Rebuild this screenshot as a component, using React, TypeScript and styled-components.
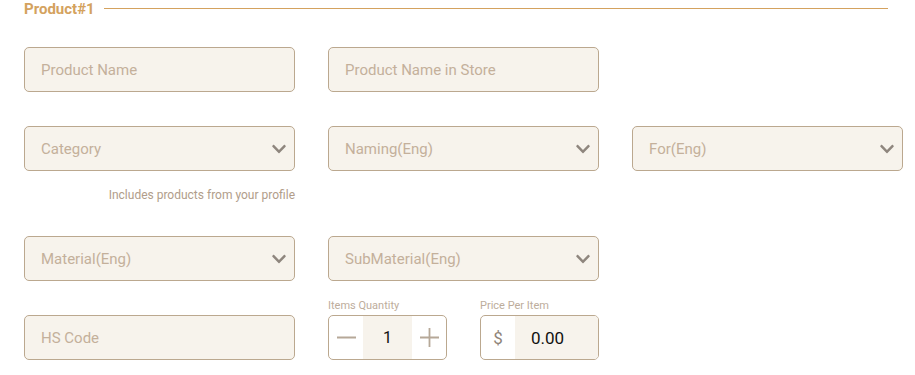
import styled, { createGlobalStyle } from 'styled-components';
import { FaChevronDown } from 'react-icons/fa';

const GlobalStyle = createGlobalStyle`
  body {
    margin: 0;
    background: #ffffff;
    font-family: Roboto, "Liberation Sans", sans-serif;
  }
`;

const Page = styled.div`
  padding: 0 12px 0 24px;
  width: 915px;
  box-sizing: border-box;
`;

const Legend = styled.div`
  display: flex;
  align-items: center;
  gap: 9px;
  height: 17px;
  margin-right: 15px;
  color: #d4a25e;
  font-size: 15px;
  font-weight: 700;

  &::after {
    content: '';
    flex: 1;
    height: 1px;
    background: #d4a25e;
  }
`;

const Row = styled.div<{ $top: number; $align?: string }>`
  display: grid;
  grid-template-columns: repeat(3, 271px);
  column-gap: 33px;
  align-items: ${(p) => p.$align || 'start'};
  margin-top: ${(p) => p.$top}px;
`;

const Cell = styled.div`
  display: flex;
  flex-direction: column;
`;

const Box = styled.div`
  box-sizing: border-box;
  height: 45px;
  display: flex;
  align-items: center;
  background: #f7f3ec;
  border: 1px solid #bba88f;
  border-radius: 5px;
  padding: 0 7px 0 16px;
  color: #c4b09b;
  font-size: 15px;
  overflow: hidden;
`;

const Placeholder = styled.span`
  flex: 1;
`;

const Chevron = styled(FaChevronDown)`
  color: #8f867e;
  width: 16px;
  height: 16px;
`;

const Helper = styled.div`
  margin-top: 17px;
  text-align: right;
  font-size: 12px;
  line-height: 14px;
  color: #b19d8a;
`;

const SmallPair = styled.div`
  display: flex;
  gap: 33px;
`;

const SmallField = styled.div`
  width: 119px;
  display: flex;
  flex-direction: column;
`;

const Label = styled.div`
  font-size: 11px;
  line-height: 13px;
  color: #bdad9c;
  margin-bottom: 3px;
`;

const Stepper = styled.div`
  box-sizing: border-box;
  height: 45px;
  display: flex;
  border: 1px solid #bba88f;
  border-radius: 5px;
  overflow: hidden;
  background: #ffffff;
`;

const Side = styled.div<{ $w: number }>`
  width: ${(p) => p.$w}px;
  display: flex;
  align-items: center;
  justify-content: center;
  color: #8f8478;
  font-size: 17px;
`;

const Value = styled.div<{ $center?: boolean }>`
  flex: 1;
  display: flex;
  align-items: center;
  justify-content: ${(p) => (p.$center ? 'center' : 'flex-start')};
  padding-left: ${(p) => (p.$center ? 0 : 16)}px;
  background: #f7f3ec;
  color: #111111;
  font-size: ${(p) => (p.$center ? 16 : 17)}px;
`;

const Select = ({ text }: { text: string }) => (
  <Box>
    <Placeholder>{text}</Placeholder>
    <Chevron />
  </Box>
);

const Line = ({ plus }: { plus?: boolean }) => (
  <svg width="19" height="19" viewBox="0 0 19 19">
    <path d="M0 9.5h19" stroke="#b6a898" strokeWidth="1.8" />
    {plus && <path d="M9.5 0v19" stroke="#b6a898" strokeWidth="1.8" />}
  </svg>
);

export default function App() {
  return (
    <Page>
      <GlobalStyle />
      <Legend>Product#1</Legend>
      <Row $top={30}>
        <Box>Product Name</Box>
        <Box>Product Name in Store</Box>
      </Row>
      <Row $top={34}>
        <Cell>
          <Select text="Category" />
          <Helper>Includes products from your profile</Helper>
        </Cell>
        <Select text="Naming(Eng)" />
        <Select text="For(Eng)" />
      </Row>
      <Row $top={34}>
        <Select text="Material(Eng)" />
        <Select text="SubMaterial(Eng)" />
      </Row>
      <Row $top={18} $align="end">
        <Box>HS Code</Box>
        <SmallPair>
          <SmallField>
            <Label>Items Quantity</Label>
            <Stepper>
              <Side $w={34}>
                <Line />
              </Side>
              <Value $center>1</Value>
              <Side $w={34}>
                <Line plus />
              </Side>
            </Stepper>
          </SmallField>
          <SmallField>
            <Label>Price Per Item</Label>
            <Stepper>
              <Side $w={34}>$</Side>
              <Value>0.00</Value>
            </Stepper>
          </SmallField>
        </SmallPair>
      </Row>
    </Page>
  );
}
